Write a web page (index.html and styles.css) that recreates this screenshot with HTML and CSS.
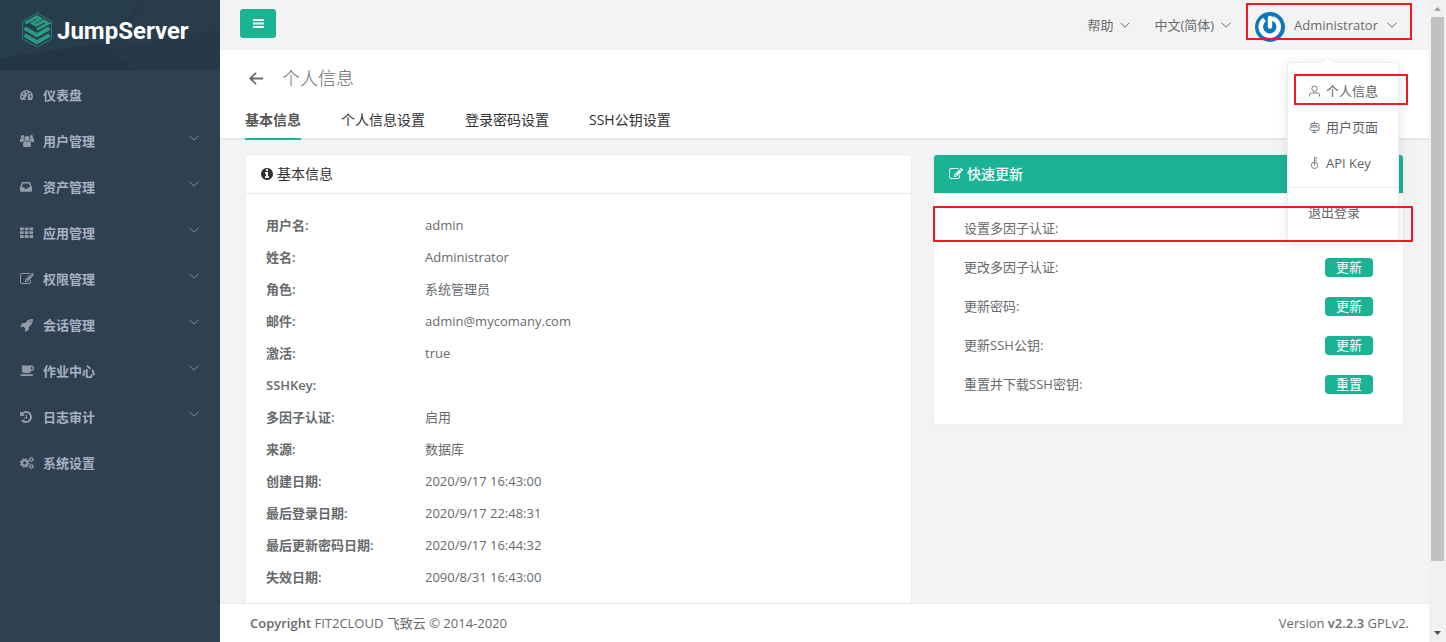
FILE: index.html
```html
<!DOCTYPE html>
<html lang="zh-CN">
<head>
<meta charset="utf-8">
<title>个人信息 - JumpServer</title>
<link rel="stylesheet" href="styles.css">
</head>
<body>
<svg class="defs" aria-hidden="true">
  <symbol id="down" viewBox="0 0 10 6"><path d="M.5.7 5 5.2 9.5.7" fill="none" stroke="currentColor"/></symbol>
  <symbol id="edit" viewBox="0 0 1792 1792"><path d="M888 1184l116-116-152-152-116 116v56h96v96h56zm440-720q-16-16-33 1l-350 350q-17 17-1 33t33-1l350-350q17-17 1-33zm80 594v190q0 119-84.5 203.5t-203.5 84.5h-832q-119 0-203.5-84.5t-84.5-203.5v-832q0-119 84.5-203.5t203.5-84.5h832q63 0 117 25 15 7 18 23 3 17-9 29l-49 49q-14 14-32 8-23-6-45-6h-832q-66 0-113 47t-47 113v832q0 66 47 113t113 47h832q66 0 113-47t47-113v-126q0-13 9-22l64-64q15-15 35-7t20 29zm-96-738l288 288-672 672h-288v-288zm444 132l-92 92-288-288 92-92q28-28 68-28t68 28l152 152q28 28 28 68t-28 68z"/></symbol>
</svg>
<div class="app">
  <aside class="sidebar">
    <div class="logo">
      <svg class="logo-bg" viewBox="0 0 220 70" preserveAspectRatio="none"><path d="M0 0h220v70H0z" fill="#263949"/><path d="M0 0h145L102 43 50 70H0z" fill="#283d4c"/><path d="M102 43 136 70H0V58z" fill="#243644"/><path d="M145 0h75v30L115 48z" fill="#293c4b"/></svg>
      <svg class="logo-mark" viewBox="0 0 30 36"><path d="M15 1 29.5 9.300v17.400L15 35 .5 26.700V9.300z" fill="none" stroke="#238071"/><g fill="none" stroke="#2c9980" stroke-width="2.800"><path d="M3.200 11.300 15 4.700l3.500 2-8 4.600 3.500 2 8-4.400 4.500 2.400L15 17.500"/><path stroke-width="3.800" d="M2.500 16 15 23.200 27.500 16M2.500 23 15 30.200 27.500 23"/></g></svg>
      <span class="logo-name">JumpServer</span>
    </div>
    <nav>
      <a class="item" href="#"><svg class="mi" viewBox="0 0 14 14"><path d="M1 12a6.500 6.500 0 1 1 11 0z"/><g fill="#2f4050"><circle cx="2.400" cy="8.500" r=".9"/><circle cx="3.500" cy="5.400" r=".9"/><circle cx="6.500" cy="4" r=".9"/><circle cx="9.500" cy="5.400" r=".9"/><circle cx="10.600" cy="8.500" r=".9"/><path d="M7.200 5.500 8 5.700 7.400 9a1.500 1.500 0 1 1-1-.2z"/></g></svg><span>仪表盘</span></a>
      <a class="item" href="#"><svg class="mi" viewBox="0 0 14 14"><circle cx="2.600" cy="2.800" r="1.700"/><circle cx="11.400" cy="2.800" r="1.700"/><circle cx="7" cy="4.500" r="2.500"/><path d="M0 8V6q0-2 1-2 2 1 2.800.4Q4 6 5 7H3.200L2.500 8zM14 8V6q0-2-1-2-2 1-2.800.4Q10 6 9 7h1.800l.7 1zM3 11.500Q2.800 7 5 7q2 1.300 4 0 2.200 0 2 4.500Q11 13 9.500 13h-5Q3 13 3 11.500z"/></svg><span>用户管理</span><svg class="arrow"><use href="#down"/></svg></a>
      <a class="item" href="#"><svg class="mi" viewBox="0 0 14 14"><path fill-rule="evenodd" d="M2.500 2h7q.5 0 .7.500L12 7.500V11q0 .8-.8.8H.8Q0 11.800 0 11V7.500l1.800-5q.2-.5.7-.5zM3 3.500 1.600 7.200H4l.7 1.500h2.600L8 7.200h2.400L9 3.500z"/></svg><span>资产管理</span><svg class="arrow"><use href="#down"/></svg></a>
      <a class="item" href="#"><svg class="mi" viewBox="0 0 14 14"><path d="M0 1.500h3.700v2.800H0zm4.700 0h3.700v2.800H4.700zm4.700 0h3.700v2.800H9.400zM0 5.300h3.700v2.800H0zm4.700 0h3.700v2.800H4.700zm4.700 0h3.700v2.800H9.400zM0 9.100h3.700v2.800H0zm4.700 0h3.700v2.800H4.700zm4.700 0h3.700v2.800H9.400z"/></svg><span>应用管理</span><svg class="arrow"><use href="#down"/></svg></a>
      <a class="item" href="#"><svg class="mi"><use href="#edit"/></svg><span>权限管理</span><svg class="arrow"><use href="#down"/></svg></a>
      <a class="item" href="#"><svg class="mi" viewBox="0 0 1792 1792"><path d="M1440 448q0-40-28-68t-68-28-68 28-28 68 28 68 68 28 68-28 28-68zm224-288q0 249-75.500 430.500t-253.500 360.500q-81 80-195 176l-20 379q-2 16-16 26l-384 224q-7 4-16 4-12 0-23-9l-64-64q-13-14-8-32l85-276-281-281-276 85q-3 1-9 1-14 0-23-9l-64-64q-17-19-5-39l224-384q10-14 26-16l379-20q96-114 176-195 188-187 358-258t431-71q14 0 24 9.500t10 22.500z"/></svg><span>会话管理</span><svg class="arrow"><use href="#down"/></svg></a>
      <a class="item" href="#"><svg class="mi" viewBox="0 0 14 14"><path fill-rule="evenodd" d="M2 1.500h9.500a2.700 2.700 0 0 1 0 5.400H11Q10.700 9 8.700 9H4.300Q2 9 2 7zM11 3v2.500h.5a1.250 1.250 0 0 0 0-2.500zM0 10.300h13.500q-.2 1.700-1.700 1.700H1.700Q.2 12 0 10.300z"/></svg><span>作业中心</span><svg class="arrow"><use href="#down"/></svg></a>
      <a class="item" href="#"><svg class="mi" viewBox="128 0 1792 1792"><path d="M1664 896q0 156-61 298t-164 245-245 164-298 61q-172 0-327-72.500t-264-204.500q-7-10-6.500-22.500t8.500-20.500l137-138q10-9 25-9 16 2 23 12 73 95 179 147t225 52q104 0 198.500-40.500t163.500-109.500 109.500-163.500 40.500-198.500-40.500-198.500-109.500-163.500-163.500-109.500-198.500-40.500q-98 0-188 35.500t-160 101.500l137 138q31 30 14 69-17 40-59 40h-448q-26 0-45-19t-19-45v-448q0-42 40-59 39-17 69 14l130 129q107-101 244.500-156.500t284.500-55.500q156 0 298 61t245 164 164 245 61 298zm-640-288v448q0 14-9 23t-23 9h-320q-14 0-23-9t-9-23v-64q0-14 9-23t23-9h224v-352q0-14 9-23t23-9h64q14 0 23 9t9 23z"/></svg><span>日志审计</span><svg class="arrow"><use href="#down"/></svg></a>
      <a class="item" href="#"><svg class="mi" viewBox="0 0 14 14"><g fill="none" stroke="currentColor"><circle cx="4.700" cy="7" r="2.700" stroke-width="2"/><circle cx="4.700" cy="7" r="4.200" stroke-width="1.400" stroke-dasharray="1.650 1.650"/><circle cx="11.300" cy="3.500" r="1.500" stroke-width="1.200"/><circle cx="11.300" cy="3.500" r="2.300" stroke-width=".8" stroke-dasharray="1.200 1.200"/><circle cx="11.300" cy="10.500" r="1.500" stroke-width="1.200"/><circle cx="11.300" cy="10.500" r="2.300" stroke-width=".8" stroke-dasharray="1.200 1.200"/></g></svg><span>系统设置</span></a>
    </nav>
  </aside>

  <div class="main">
    <header class="topbar">
      <button class="toggle" aria-label="折叠菜单"><svg viewBox="0 0 11 9"><path d="M0 0h11v2H0zm0 3.500h11v2H0zM0 7h11v2H0z"/></svg></button>
      <div class="top-menu">
        <button class="drop">帮助<svg class="arrow"><use href="#down"/></svg></button>
        <button class="drop">中文(简体)<svg class="arrow"><use href="#down"/></svg></button>
        <div class="account">
          <button class="drop user"><svg class="avatar" viewBox="0 0 30 30"><circle cx="15" cy="15" r="15" fill="#0f78b9"/><path d="M9.500 7.500A9 9 0 1 0 20 7.500L17 6.500" fill="none" stroke="#fff" stroke-width="4.600" stroke-linejoin="round"/><path d="M15 6v8.500" stroke="#fff" stroke-width="4.400" stroke-linecap="round"/></svg><span>Administrator</span><svg class="arrow"><use href="#down"/></svg></button>
          <div class="mark mark-user"></div>
          <div class="popup">
            <a href="#"><svg viewBox="0 0 12 12"><circle cx="6" cy="3.700" r="2.700"/><path d="M1 11.500V10q0-2 2-2h6q2 0 2 2v1.500"/></svg>个人信息</a>
            <a href="#"><svg viewBox="0 0 12 12"><path d="M6 .5v2M2.500 2.500h7l1.500 1.700L9.500 6h-7zM2.500 6 1 7.700l1.500 1.600h8V6M6 9.500V12M4 11.500h4M3.500 4.300h5"/></svg>用户页面</a>
            <a href="#"><svg viewBox="0 0 12 12"><circle cx="6" cy="8.300" r="3.200"/><path d="M6 8.500V.8h2.800M6 3.200h2"/></svg>API Key</a>
            <a class="logout" href="#">退出登录</a>
            <div class="mark mark-profile"></div>
          </div>
        </div>
      </div>
    </header>

    <section class="page-head">
      <div class="title-row">
        <button class="back" aria-label="返回"><svg viewBox="0 0 15 13"><path d="M14 6.500H1.500M7 .8 1.300 6.500 7 12.200" fill="none" stroke="currentColor" stroke-width="1.800"/></svg></button>
        <h1>个人信息</h1>
      </div>
      <nav class="tabs">
        <a class="active" href="#">基本信息</a>
        <a href="#">个人信息设置</a>
        <a href="#">登录密码设置</a>
        <a href="#">SSH公钥设置</a>
      </nav>
    </section>

    <main class="content">
      <section class="card">
        <h2><svg class="hi" viewBox="128 0 1536 1792"><path d="M1152 1376v-160q0-14-9-23t-23-9h-96v-512q0-14-9-23t-23-9h-320q-14 0-23 9t-9 23v160q0 14 9 23t23 9h96v320h-96q-14 0-23 9t-9 23v160q0 14 9 23t23 9h448q14 0 23-9t9-23zm-128-896v-160q0-14-9-23t-23-9h-192q-14 0-23 9t-9 23v160q0 14 9 23t23 9h192q14 0 23-9t9-23zm640 416q0 209-103 385.500t-279.500 279.500-385.500 103-385.500-103-279.500-279.500-103-385.500 103-385.500 279.500-279.500 385.500-103 385.500 103 279.500 279.500 103 385.500z"/></svg>基本信息</h2>
        <dl>
          <dt>用户名:</dt><dd>admin</dd>
          <dt>姓名:</dt><dd>Administrator</dd>
          <dt>角色:</dt><dd>系统管理员</dd>
          <dt>邮件:</dt><dd>admin@mycomany.com</dd>
          <dt>激活:</dt><dd>true</dd>
          <dt>SSHKey:</dt><dd></dd>
          <dt>多因子认证:</dt><dd>启用</dd>
          <dt>来源:</dt><dd>数据库</dd>
          <dt>创建日期:</dt><dd>2020/9/17 16:43:00</dd>
          <dt>最后登录日期:</dt><dd>2020/9/17 22:48:31</dd>
          <dt>最后更新密码日期:</dt><dd>2020/9/17 16:44:32</dd>
          <dt>失效日期:</dt><dd>2090/8/31 16:43:00</dd>
        </dl>
      </section>
      <section class="card quick">
        <h2><svg class="hi wide"><use href="#edit"/></svg>快速更新</h2>
        <ul>
          <li><span>设置多因子认证:</span><div class="mark mark-mfa"></div></li>
          <li><span id="q1">更改多因子认证:</span><button aria-describedby="q1">更新</button></li>
          <li><span id="q2">更新密码:</span><button aria-describedby="q2">更新</button></li>
          <li><span id="q3">更新SSH公钥:</span><button aria-describedby="q3">更新</button></li>
          <li><span id="q4">重置并下载SSH密钥:</span><button aria-describedby="q4">重置</button></li>
        </ul>
      </section>
    </main>

    <footer>
      <span><b>Copyright</b> FIT2CLOUD 飞致云 © 2014-2020</span>
      <span>Version <b>v2.2.3</b> GPLv2.</span>
    </footer>
  </div>

  <div class="scrollbar" aria-hidden="true">
    <svg viewBox="0 0 17 17"><path d="M5 11h7L8.500 7z" fill="#a3a3a3"/></svg>
    <div class="track"><div class="thumb"></div></div>
    <svg viewBox="0 0 17 17"><path d="M5 6h7l-3.500 4z" fill="#505050"/></svg>
  </div>
</div>
</body>
</html>
```
FILE: styles.css
```css
* { box-sizing: border-box; }
body {
  margin: 0;
  font: 13px/20px "Open Sans", "Noto Sans CJK SC", sans-serif;
  color: #676a6c;
  background: #f3f3f3;
}
a { color: inherit; text-decoration: none; }
button { font: inherit; color: inherit; border: 0; padding: 0; background: none; cursor: pointer; }
h1, h2, ul, dl, dd { margin: 0; padding: 0; }
svg { display: block; flex: none; }
.defs { position: absolute; width: 0; height: 0; }
.app { display: flex; height: 100vh; overflow: hidden; }

.sidebar { flex: none; width: 220px; background: #2f4050; color: #a7b1c2; }
.logo { position: relative; display: flex; align-items: flex-start; gap: 5px; height: 70px; padding: 12px 22px; }
.logo-bg { position: absolute; inset: 0; width: 100%; height: 100%; }
.logo-mark { position: relative; width: 30px; height: 36px; }
.logo-name { position: relative; font: bold 24px/38px Roboto, sans-serif; color: #fff; }
.item { display: flex; align-items: center; height: 46px; padding: 4px 21px 0 20px; font-weight: 600; }
.item span { flex: 1; padding-bottom: 1px; }
.mi { width: 14px; height: 14px; margin-right: 9px; fill: currentColor; color: #939ba5; }
.arrow { width: 10px; height: 6px; }
.item .arrow { margin-bottom: 6px; color: #7f8b99; }

.main { flex: 1; min-width: 0; display: flex; flex-direction: column; }
.topbar { display: flex; justify-content: space-between; flex: none; height: 50px; padding: 8px 32px 0 20px; }
.toggle { display: grid; place-items: center; width: 36px; height: 29px; margin-top: 1px; border-radius: 3px; background: #1ab394; }
.toggle svg { width: 11px; height: 9px; fill: #fff; }
.top-menu { display: flex; align-items: flex-start; gap: 24px; height: 34px; }
.drop { display: flex; align-items: center; gap: 7px; height: 34px; }
.user { gap: 9px; }
.avatar { width: 30px; height: 30px; margin-top: 4px; }
.account { position: relative; }
.popup {
  position: absolute; z-index: 2; top: 54px; right: -2px; width: 112px; height: 180px;
  padding: 10px 0; border: 1px solid #ebeef5; border-radius: 4px;
  background: #fff; box-shadow: 0 2px 12px rgba(0, 0, 0, .1);
}
.popup::before {
  content: ""; position: absolute; top: -5px; left: 35px; width: 8px; height: 8px;
  border: 1px solid #ebeef5; border-width: 1px 0 0 1px; background: #fff; transform: rotate(45deg);
}
.popup a { display: flex; align-items: center; gap: 5px; height: 36px; padding-left: 20px; color: #606266; }
.popup a svg { width: 13px; height: 12px; fill: none; stroke: #7b7d80; }
.popup .logout { height: 48px; margin-top: 6px; border-top: 1px solid #ebeef5; }
.mark { position: absolute; z-index: 3; border: 2px solid #ed1c24; pointer-events: none; }
.mark-user { top: -5px; left: -9px; right: -15px; height: 37px; }
.mark-profile { top: 11px; left: 6px; right: -10px; height: 31px; }
.mark-mfa { top: -2px; left: -31px; right: -40px; height: 36px; }

.page-head { flex: none; background: #fff; border-bottom: 2px solid #e4e7ed; }
.title-row { display: flex; align-items: center; gap: 18px; height: 50px; padding: 6px 29px 0; }
.back svg { width: 15px; height: 13px; }
h1 { font-size: 18px; line-height: 24px; font-weight: 300; }
.tabs { display: flex; gap: 40px; padding: 0 25px; font-size: 14px; color: #303133; }
.tabs a { height: 40px; margin-bottom: -2px; line-height: 40px; }
.tabs .active { font-weight: 600; color: #555; border-bottom: 2px solid #1ab394; }

.content {
  flex: 1; min-height: 0; overflow: hidden; display: grid; grid-template-columns: 17fr 12fr;
  align-items: start; gap: 21px; padding: 14px 25px 0;
}
.card { background: #fff; border: 1px solid #ebeef5; border-radius: 4px; }
h2 {
  display: flex; align-items: center; gap: 4px; height: 39px; padding: 0 15px;
  font-size: 14px; font-weight: 400; color: #303133; border-bottom: 1px solid #e7eaec;
}
.hi { width: 12px; height: 14px; fill: currentColor; }
.wide { width: 14px; }
dl { display: grid; grid-template-columns: 159px 1fr; grid-auto-rows: 32px; padding: 15px 20px; line-height: 32px; }
dt { font-weight: 600; }
.quick h2 { color: #fff; background: #1ab394; border-radius: 3px 3px 0 0; font-weight: 500; }
ul { list-style: none; padding: 14px 30px 21px; }
li { position: relative; display: flex; justify-content: space-between; align-items: center; height: 39px; }
li button { width: 48px; height: 19px; margin-top: 1px; border-radius: 4px; line-height: 19px; color: #fff; background: #1ab394; }

footer {
  flex: none; display: flex; justify-content: space-between; height: 39px; padding: 0 20px 0 30px;
  line-height: 39px; background: #fff; border-top: 1px solid #e7eaec;
}
b { font-weight: 600; }

.scrollbar { flex: none; width: 17px; display: flex; flex-direction: column; background: #f1f1f1; }
.scrollbar svg { width: 17px; height: 17px; }
.track { flex: 1; padding: 0 2px; }
.thumb { height: 89.500%; background: #c1c1c1; }
```
